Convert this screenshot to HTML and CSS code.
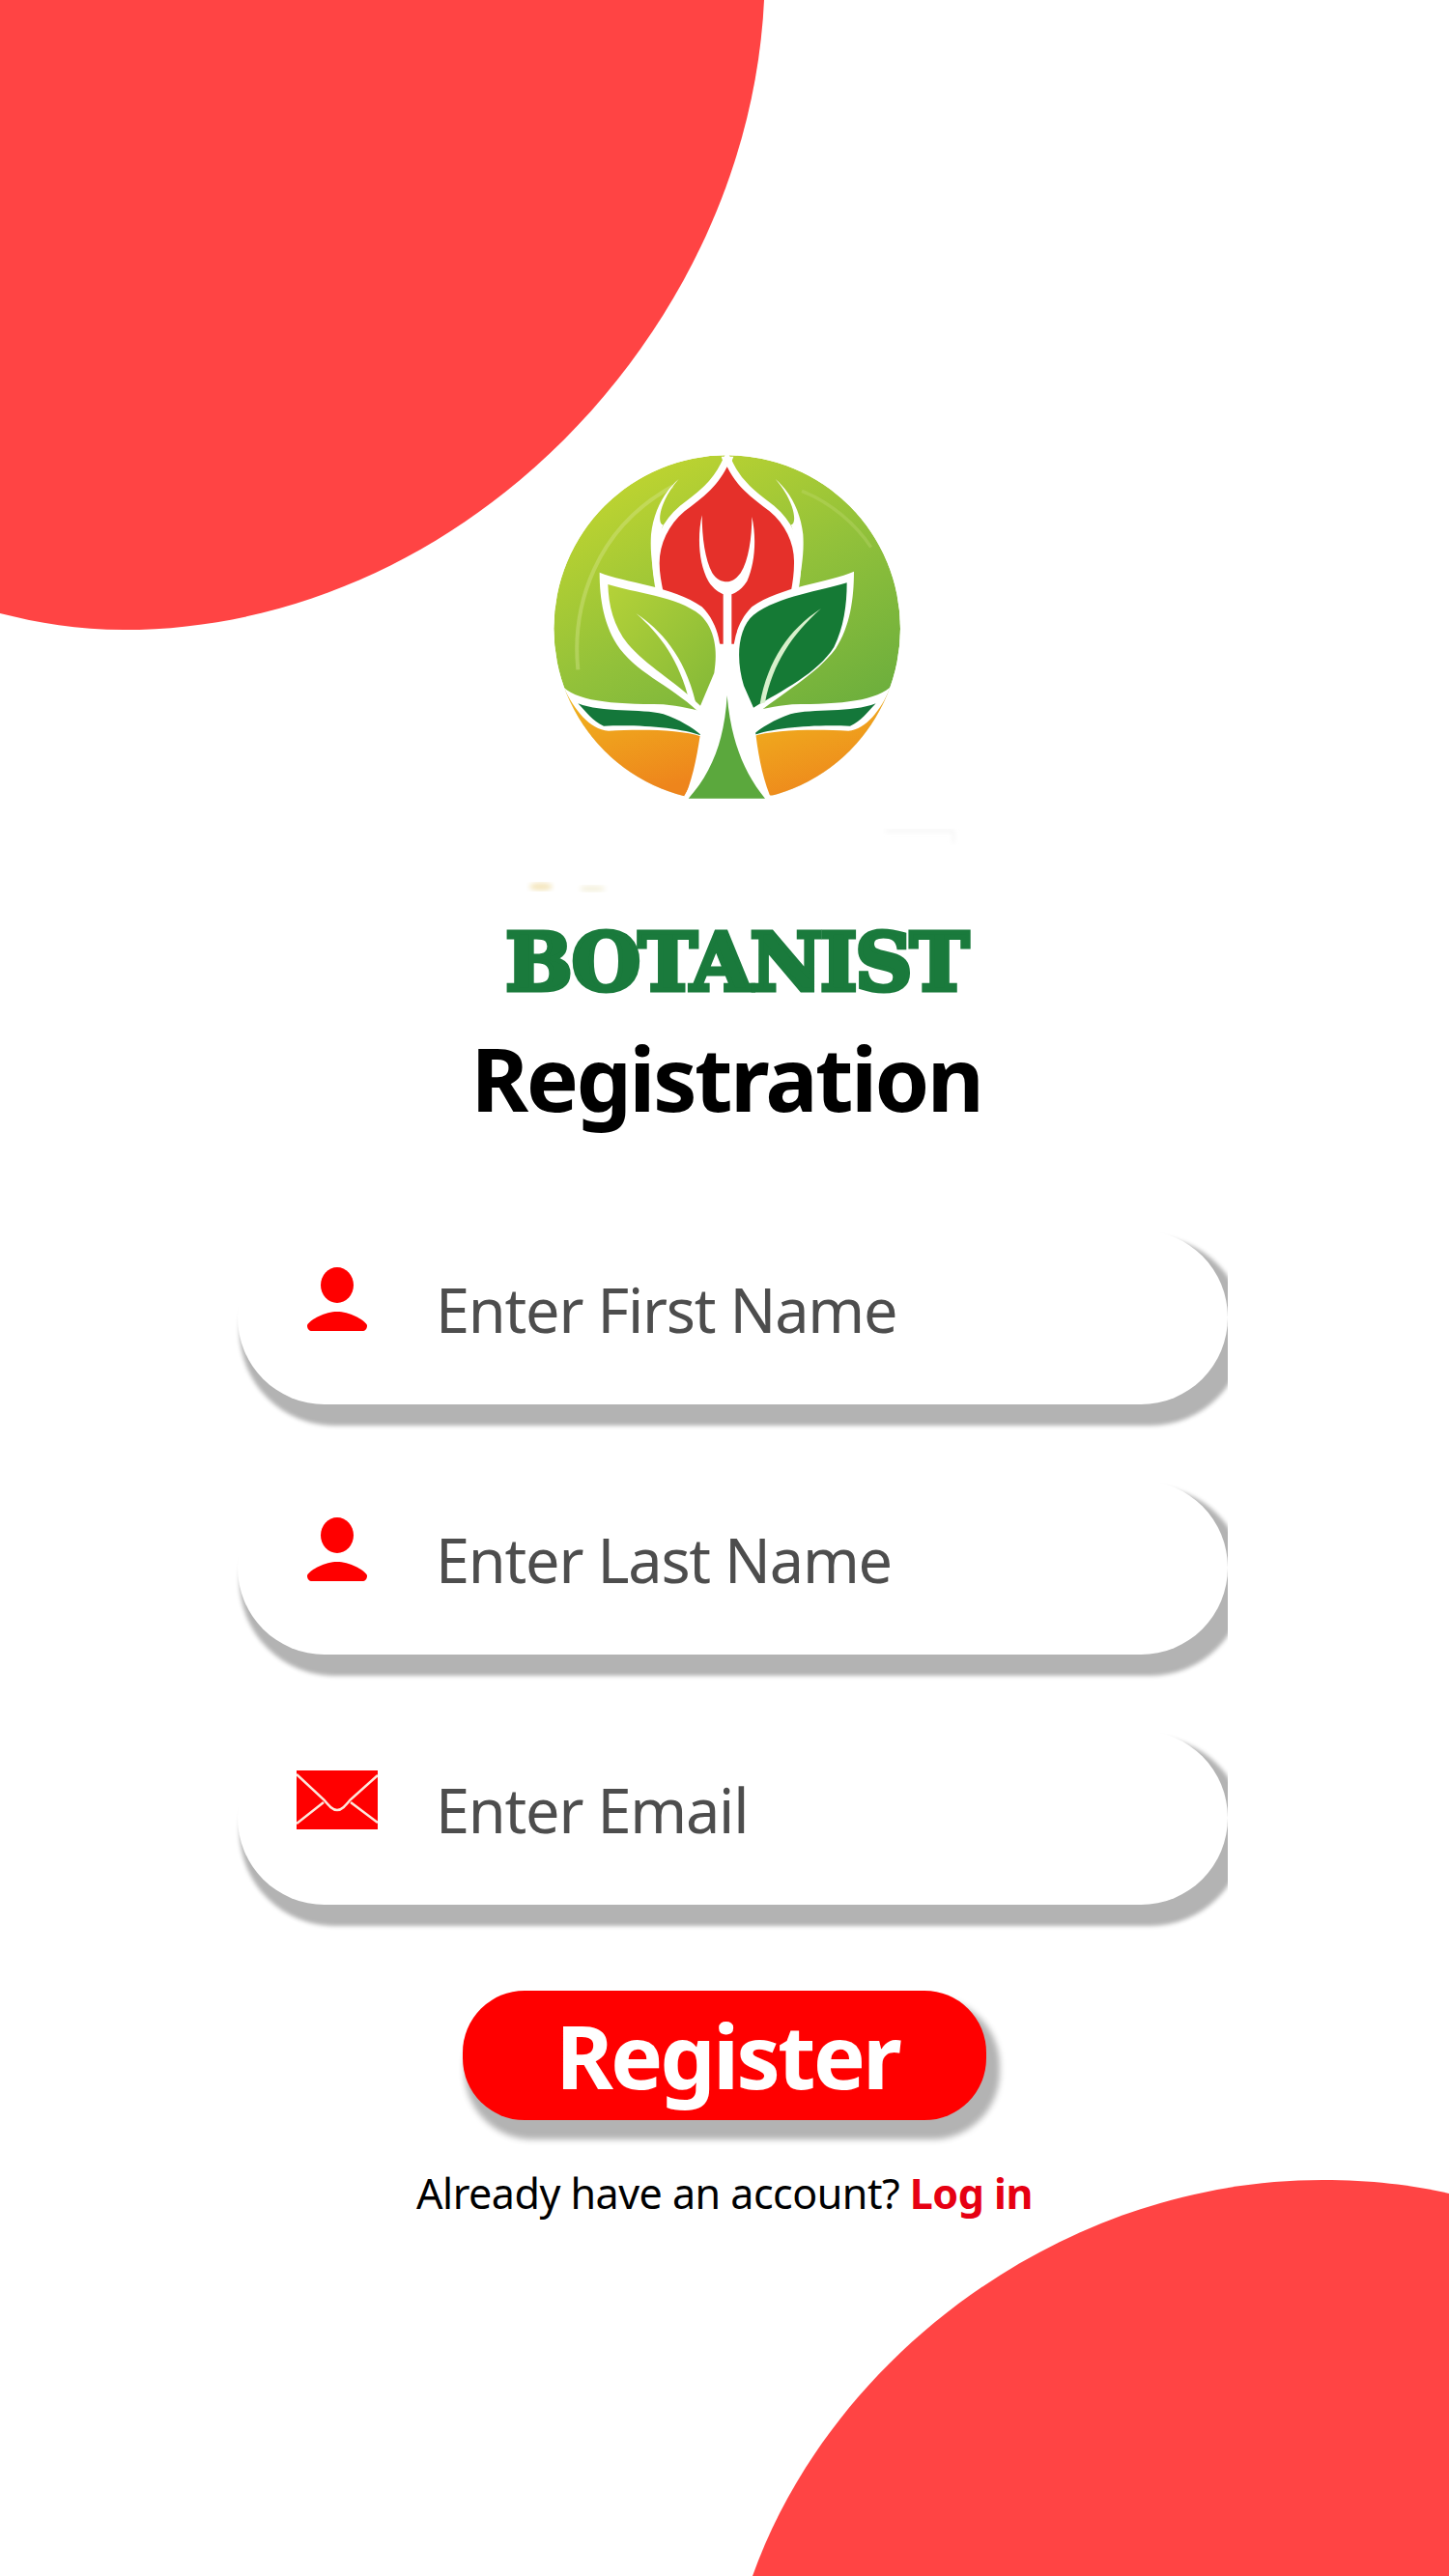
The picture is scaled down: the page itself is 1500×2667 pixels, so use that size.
FILE: index.html
```html
<!DOCTYPE html>
<html lang="en">
<head>
<meta charset="utf-8">
<title>Botanist Registration</title>
<link rel="stylesheet" href="styles.css">
</head>
<body>
<svg class="blob blob-top" viewBox="0 0 800 660" aria-hidden="true"><path d="M0,0 H791 C775,340 480,652 128,652 C80,652 40,645 0,635 Z"/></svg>
<svg class="blob blob-bottom" viewBox="0 0 740 427" aria-hidden="true"><path d="M19,427 C100,200 340,17 609,17 C660,17 700,22 740,31 V427 Z"/></svg>
<main class="page">
  <svg class="logo" viewBox="-180 0 1680 1500" aria-label="Botanist logo">
    <defs>
      <linearGradient id="disc" x1="0.2" y1="0" x2="0.75" y2="1">
        <stop offset="0" stop-color="#c3d62f"/><stop offset="0.45" stop-color="#92c13a"/><stop offset="1" stop-color="#5fa83e"/>
      </linearGradient>
      <linearGradient id="leafLight" x1="0" y1="0" x2="1" y2="1">
        <stop offset="0" stop-color="#b5d238"/><stop offset="1" stop-color="#82b838"/>
      </linearGradient>
      <linearGradient id="bowl" x1="0" y1="0" x2="0.4" y2="1">
        <stop offset="0" stop-color="#f0bb1e"/><stop offset="1" stop-color="#ee851c"/>
      </linearGradient>
      <clipPath id="discClip"><circle cx="668" cy="632" r="538"/></clipPath>
      <filter id="soft"><feGaussianBlur stdDeviation="8"/></filter>
    </defs>
    <g clip-path="url(#discClip)">
      <circle cx="668" cy="632" r="538" fill="url(#disc)"/>
      <path d="M205,760 C185,560 260,320 500,190" fill="none" stroke="#d6e58f" stroke-width="12" opacity="0.4"/>
      <path d="M900,205 C990,240 1070,310 1115,380" fill="none" stroke="#c8df7a" stroke-width="10" opacity="0.3"/>
      <path fill="#fff" d="M150,805 C200,860 300,866 470,868 C520,872 565,885 620,895 L620,1175 L150,1175 Z"/>
      <path fill="#fff" d="M1186,805 C1130,860 1030,866 870,868 C820,872 770,885 716,895 L716,1175 L1186,1175 Z"/>
      <path fill="url(#bowl)" d="M160,815 C195,885 240,945 300,950 C400,945 520,945 590,968 L610,1000 C590,1060 560,1110 535,1152 L100,1175 L100,815 Z"/>
      <path fill="url(#bowl)" d="M1176,815 C1145,885 1100,945 1045,950 C945,945 815,945 745,968 L725,1005 C745,1060 770,1110 790,1150 L1240,1175 L1240,815 Z"/>
      <path fill="#14773a" d="M205,865 C280,895 400,880 470,898 C520,915 560,940 590,965 C520,940 400,930 285,935 C250,920 230,890 205,865 Z"/>
      <path fill="#14773a" d="M1130,865 C1055,895 935,880 865,898 C815,915 775,940 745,965 C815,940 935,930 1050,935 C1085,920 1105,890 1130,865 Z"/>
    </g>
    <path fill="#fff" d="M518,168 C475,205 440,265 432,340 C428,400 438,450 445,495 L470,490 C450,420 455,340 470,310 C450,310 455,240 518,168 Z"/>
    <path fill="#fff" d="M818,168 C861,205 896,265 904,340 C908,400 898,450 891,495 L866,490 C886,420 881,340 866,310 C886,310 881,240 818,168 Z"/>
    <path fill="#fff" d="M650,98 H688 L668,150 Z"/>
    <path fill="#e5302a" stroke="#fff" stroke-width="44" paint-order="stroke" d="M668,130 C700,195 750,230 800,268 C850,310 878,370 876,430 C876,460 872,490 866,520 L668,700 L470,520 C464,490 458,460 458,430 C458,370 486,310 536,268 C586,230 636,195 668,130 Z"/>
    <path fill="#fff" d="M590,280 C575,350 580,430 610,485 C625,510 645,520 656,526 L656,700 L682,700 L682,526 C695,520 715,510 730,485 C755,430 760,350 745,285 C745,350 735,420 710,460 C695,480 680,487 668,487 C650,487 635,480 622,460 C600,420 590,350 590,280 Z"/>
    <path fill="#fff" d="M620,680 C625,760 625,810 595,885 C585,960 570,1090 530,1170 L810,1170 C770,1090 755,960 750,885 C715,810 700,760 716,680 Z"/>
    <path fill="#fff" d="M272,458 C350,490 500,500 590,565 C645,620 655,700 645,770 L600,910 C500,810 400,780 335,695 C285,625 272,540 272,458 Z"/>
    <path fill="#fff" d="M1062,455 C985,490 835,500 745,565 C690,620 680,700 690,770 L745,910 C840,830 940,780 1005,695 C1050,625 1062,540 1062,455 Z"/>
    <path fill="url(#leafLight)" d="M298,495 C380,522 510,530 585,590 C630,632 640,700 628,770 L585,872 C500,790 420,750 360,680 C315,625 300,560 298,495 Z"/>
    <path fill="#157a35" d="M1040,490 C960,516 830,530 750,590 C700,632 695,730 720,810 L750,878 C840,825 950,770 1000,690 C1030,630 1040,560 1040,490 Z"/>
    <path fill="#fff" d="M385,585 C460,635 535,715 570,860 L552,862 C520,730 460,650 385,585 Z"/>
    <path fill="#d8f0cc" d="M960,570 C860,635 795,730 770,866 L786,862 C810,740 870,650 960,570 Z"/>
    <path fill="#5ba83d" d="M668,840 C660,980 620,1080 548,1160 L786,1160 C720,1080 680,980 668,840 Z"/>
    <ellipse cx="90" cy="1434" rx="36" ry="12" fill="#f4e6bd" filter="url(#soft)"/>
    <ellipse cx="250" cy="1440" rx="40" ry="8" fill="#f3efd8" filter="url(#soft)"/>
    <path d="M1160,1260 H1370 V1300" fill="none" stroke="#e9e9e9" stroke-width="4" filter="url(#soft)"/>
  </svg>
  <p class="brand">BOTANIST</p>
  <h1 class="title">Registration</h1>
  <form class="form">
    <div class="field">
      <svg class="field-icon" viewBox="0 0 84 66" aria-hidden="true"><ellipse cx="42" cy="18.5" rx="17" ry="18.5"/><path d="M11,60 C14,54 30,46 42,46 C54,46 70,54 73,60 C73,64 71,66 68,66 H16 C13,66 11,64 11,60 Z"/></svg>
      <span class="field-text">Enter First Name</span>
    </div>
    <div class="field">
      <svg class="field-icon" viewBox="0 0 84 66" aria-hidden="true"><ellipse cx="42" cy="18.5" rx="17" ry="18.5"/><path d="M11,60 C14,54 30,46 42,46 C54,46 70,54 73,60 C73,64 71,66 68,66 H16 C13,66 11,64 11,60 Z"/></svg>
      <span class="field-text">Enter Last Name</span>
    </div>
    <div class="field">
      <svg class="field-icon" viewBox="0 0 84 66" aria-hidden="true"><rect y="3" width="84" height="61"/><path class="flap" d="M0,7 L28,33 C33,39 37,44 42,44 C47,44 51,39 56,33 L84,8 M0,58 L28,36 M56,36 L84,57"/></svg>
      <span class="field-text">Enter Email</span>
    </div>
  </form>
  <button class="register" type="button">Register</button>
  <p class="login">Already have an account? <a class="login-link" href="#">Log in</a></p>
</main>
</body>
</html>
```

FILE: styles.css
```css
* { box-sizing: border-box; }
html, body { margin: 0; padding: 0; background: #fff; }
body { position: relative; width: 1500px; height: 2667px; overflow: hidden; font-family: "Noto Sans", "Open Sans", sans-serif; }
.blob { position: absolute; fill: #ff4444; }
.blob-top { left: 0; top: 0; width: 800px; height: 660px; }
.blob-bottom { right: 0; bottom: 0; width: 740px; height: 427px; }
.page { position: relative; display: flex; flex-direction: column; align-items: center; padding-top: 440px; }
.logo { display: block; width: 560px; height: 500px; flex: none; }
.brand { margin: 12px 0 20px 24px; height: 88px; line-height: 88px; font-family: "DejaVu Serif", serif; font-weight: 700; font-size: 82px; letter-spacing: -2.3px; color: #1a7a3c; -webkit-text-stroke: 5px #1a7a3c; }
.title { margin: 0 0 0 4px; height: 112px; line-height: 112px; font-size: 91px; font-weight: 700; letter-spacing: -2.6px; color: #000; }
.form { display: flex; flex-direction: column; gap: 79px; width: 1025px; margin: 102px 0 0 246px; align-self: flex-start; }
.field { display: flex; align-items: flex-start; height: 180px; padding: 38px 0 0 61px; gap: 60px; background: #fff; border-radius: 90px; box-shadow: 10px 14px 4px 8px #b3b3b3; clip-path: inset(-40px 0 -40px -40px); }
.field-icon { flex: none; width: 84px; height: 66px; fill: #ff0000; }
.flap { fill: none; stroke: #fde8dc; stroke-width: 2.5; }
.field-text { font-size: 63px; line-height: 88px; letter-spacing: -1.2px; color: #4d4d4d; }
.register { display: block; margin-top: 89px; width: 542px; height: 134px; padding: 0 0 0 6px; border: 0; border-radius: 64px; background: #ff0000; color: #fff; font-family: inherit; font-size: 91px; font-weight: 700; letter-spacing: -2.9px; line-height: 1; box-shadow: 8px 14px 6px 6px #b3b3b3; }
.login { margin: 47px 0 0; font-size: 43px; line-height: 58px; letter-spacing: -0.5px; color: #000; }
.login-link { color: #e60012; font-weight: 700; text-decoration: none; }
```
